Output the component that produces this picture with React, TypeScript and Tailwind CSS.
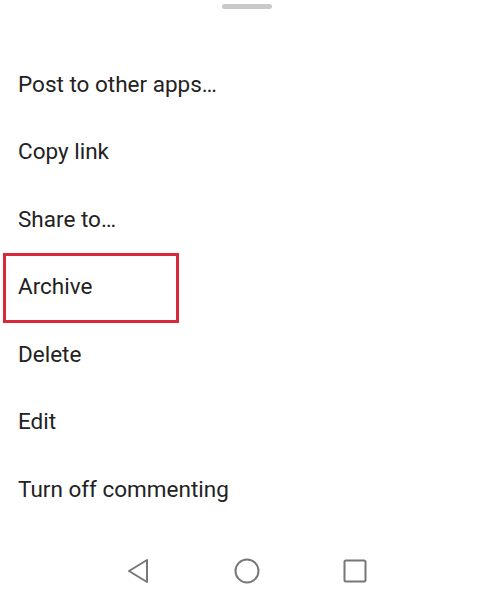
const items = [
  "Post to other apps…",
  "Copy link",
  "Share to…",
  "Archive",
  "Delete",
  "Edit",
  "Turn off commenting",
];

export default function App() {
  return (
    <div className="w-[494px] h-[600px] bg-white flex flex-col overflow-hidden" style={{ fontFamily: "Roboto, 'Liberation Sans', sans-serif" }}>
      {/* drag handle */}
      <div className="flex justify-center pt-[4px]">
        <div className="w-[50px] h-[5px] rounded-full bg-[#c9c9c9]" />
      </div>

      <ul className="mt-[42px] flex flex-col">
        {items.map((label) => (
          <li key={label} className="relative h-[67.5px] flex items-center pl-[18px] text-[22.5px] text-[#222]">
            {label}
            {label === "Archive" && (
              <div className="absolute left-[3px] top-[-1px] w-[176px] h-[70px] border-[3px] border-[#d8283a]" />
            )}
          </li>
        ))}
      </ul>

      {/* nav bar */}
      <div className="mt-auto h-[58px] flex items-center justify-center gap-[82px] text-[#777]">
        <svg width="26" height="26" viewBox="0 0 26 26" fill="none" stroke="currentColor" strokeWidth="2" strokeLinejoin="round">
          <path d="M21 2 L3 13 L21 24 Z" />
        </svg>
        <svg width="26" height="26" viewBox="0 0 26 26" fill="none" stroke="currentColor" strokeWidth="2">
          <circle cx="13" cy="13" r="11.5" />
        </svg>
        <svg width="26" height="26" viewBox="0 0 26 26" fill="none" stroke="currentColor" strokeWidth="2" strokeLinejoin="round">
          <rect x="2.5" y="2.5" width="21" height="21" rx="1.5" />
        </svg>
      </div>
    </div>
  );
}
